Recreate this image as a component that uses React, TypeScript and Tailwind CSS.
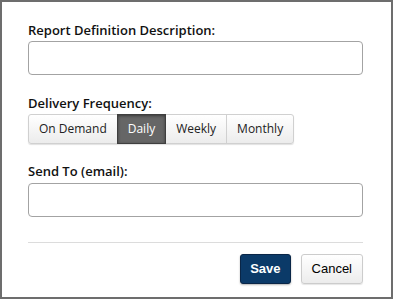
import { useState } from "react";

const FREQUENCIES = ["On Demand", "Daily", "Weekly", "Monthly"];

const labelClass =
  "block text-[13px] leading-[18px] font-semibold text-[#111] mb-[2px]";

const inputClass =
  "block w-full h-[34px] rounded-[4px] border border-[#a3a3a3] bg-white px-2 text-[13px] outline-none";

function FrequencyGroup({
  value,
  onChange,
}: {
  value: string;
  onChange: (v: string) => void;
}) {
  return (
    <div className="flex h-[30px] w-fit rounded-[3px] shadow-[0_1px_1px_rgba(0,0,0,0.12)]">
      {FREQUENCIES.map((freq, i) => {
        const active = freq === value;
        return (
          <button
            key={freq}
            type="button"
            onClick={() => onChange(freq)}
            className={`px-[10px] text-[12px] leading-none border ${
              i === 0 ? "rounded-l-[3px]" : "-ml-px"
            } ${i === FREQUENCIES.length - 1 ? "rounded-r-[3px]" : ""} ${
              active
                ? "relative z-10 bg-[#666] border-[#3f3f3f] text-white shadow-[inset_0_1px_3px_rgba(0,0,0,0.45)]"
                : "bg-gradient-to-b from-white to-[#ececec] border-[#d0d0d0] text-[#222]"
            }`}
          >
            {freq}
          </button>
        );
      })}
    </div>
  );
}

export default function App() {
  const [frequency, setFrequency] = useState("Daily");

  return (
    <div
      className="w-[393px] h-[299px] border-2 border-[#6d6d6d] bg-white pt-[19px] pl-[26px] pr-[28px]"
      style={{ fontFamily: '"Open Sans", sans-serif' }}
    >
      <label className={labelClass}>Report Definition Description:</label>
      <input type="text" className={inputClass} />

      <div className="mt-[19px]">
        <label className={labelClass}>Delivery Frequency:</label>
        <FrequencyGroup value={frequency} onChange={setFrequency} />
      </div>

      <div className="mt-[18px]">
        <label className={`${labelClass} !mb-[3px]`}>Send To (email):</label>
        <input type="email" className={inputClass} />
      </div>

      <div className="mt-[25px] border-t border-[#dcdcdc] pt-[11px] flex justify-end gap-[10px] font-['Liberation_Sans',Arial,sans-serif] text-[13px]">
        <button
          type="button"
          className="h-[30px] px-[9px] rounded-[3px] border border-[#0a2647] bg-[#0b3a68] font-bold text-white shadow-[0_1px_2px_rgba(0,0,0,0.3)]"
        >
          Save
        </button>
        <button
          type="button"
          className="h-[30px] px-[10px] rounded-[3px] border border-[#cccccc] bg-gradient-to-b from-white to-[#ececec] text-black shadow-[0_1px_1px_rgba(0,0,0,0.1)]"
        >
          Cancel
        </button>
      </div>
    </div>
  );
}
